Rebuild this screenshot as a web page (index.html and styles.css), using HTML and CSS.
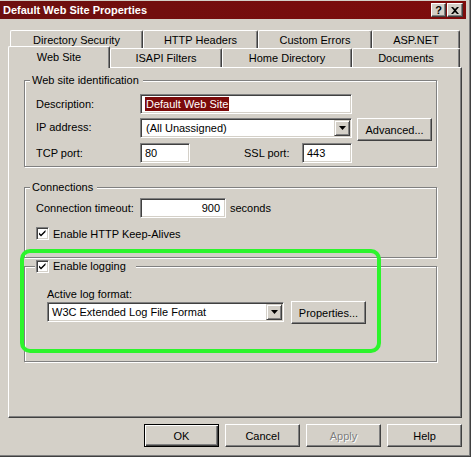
FILE: index.html
```html
<!DOCTYPE html>
<html lang="en">
<head>
  <meta charset="UTF-8">
  <title>Default Web Site Properties</title>
  <link rel="stylesheet" href="styles.css">
</head>
<body>
  <div class="dialog">
    <div class="titlebar">
      <span class="titlebar__text">Default Web Site Properties</span>
      <div class="titlebar__buttons">
        <span class="cap-btn cap-btn--help">?</span>
        <span class="cap-btn cap-btn--close">
          <svg width="8" height="7" viewBox="0 0 8 7"><path d="M0 0h2l2 2 2-2h2L5 3.5 8 7H6L4 5 2 7H0l3-3.5z" fill="#000"/></svg>
        </span>
      </div>
    </div>

    <div class="content">
      <div class="tabs">
        <div class="tabs__row tabs__row--back">
          <div class="tab" style="width:133px">Directory Security</div>
          <div class="tab" style="width:115px">HTTP Headers</div>
          <div class="tab" style="width:114px">Custom Errors</div>
          <div class="tab" style="width:88px">ASP.NET</div>
        </div>
        <div class="tabs__row tabs__row--front">
          <div class="tab tab--active" style="width:102px">Web Site</div>
          <div class="tab" style="width:112px">ISAPI Filters</div>
          <div class="tab" style="width:130px">Home Directory</div>
          <div class="tab" style="width:108px">Documents</div>
        </div>
      </div>

      <div class="panel">
        <fieldset class="group group--ident">
          <legend class="group__title">Web site identification</legend>
          <div class="row row--first">
            <span class="label">Description:</span>
            <div class="field field--desc"><span class="selected">Default Web Site</span></div>
          </div>
          <div class="row row--ip">
            <span class="label label--tall">IP address:</span>
            <div class="combo combo--ip">
              <span class="combo__text">(All Unassigned)</span>
              <span class="combo__arrow"><svg width="7" height="4" viewBox="0 0 7 4"><path d="M0 0h7L3.5 4z" fill="#000"/></svg></span>
            </div>
            <span class="btn btn--advanced">Advanced...</span>
          </div>
          <div class="row row--ports">
            <span class="label">TCP port:</span>
            <div class="field field--port">80</div>
            <span class="label label--ssl">SSL port:</span>
            <div class="field field--port">443</div>
          </div>
        </fieldset>

        <fieldset class="group group--conn">
          <legend class="group__title">Connections</legend>
          <div class="row row--timeout">
            <span class="label">Connection timeout:</span>
            <div class="field field--timeout">900</div>
            <span class="unit">seconds</span>
          </div>
          <div class="check-row">
            <span class="checkbox"><svg width="9" height="9" viewBox="0 0 9 9"><path d="M1 3.5l2 2 4.5-4.5v2L3 7.5 1 5.5z" fill="#000"/></svg></span>
            <span>Enable HTTP Keep-Alives</span>
          </div>
        </fieldset>

        <fieldset class="group group--log">
          <legend class="group__title group__title--check">
            <span class="checkbox"><svg width="9" height="9" viewBox="0 0 9 9"><path d="M1 3.5l2 2 4.5-4.5v2L3 7.5 1 5.5z" fill="#000"/></svg></span>
            <span>Enable logging</span>
          </legend>
          <div class="log-label">Active log format:</div>
          <div class="row row--log">
            <div class="combo combo--log">
              <span class="combo__text">W3C Extended Log File Format</span>
              <span class="combo__arrow"><svg width="7" height="4" viewBox="0 0 7 4"><path d="M0 0h7L3.5 4z" fill="#000"/></svg></span>
            </div>
            <span class="btn btn--props">Properties...</span>
          </div>
        </fieldset>

        <div class="highlight"></div>
      </div>

      <div class="actions">
        <span class="btn btn--default">OK</span>
        <span class="btn">Cancel</span>
        <span class="btn btn--disabled">Apply</span>
        <span class="btn">Help</span>
      </div>
    </div>
  </div>
</body>
</html>
```

FILE: styles.css
```css
*{
  box-sizing:border-box;
}
body{
  margin:0;
  background:#d4d0c8;
  font-family:"Liberation Sans", Arial, sans-serif;
  font-size:11px;
  color:#000;
}
.dialog{
  width:471px;
  height:457px;
  display:flex;
  flex-direction:column;
  padding:1px 4px 0 0;
  background:#d4d0c8;
  border-right:1px solid #404040;
  border-bottom:1px solid #404040;
  box-shadow:inset -1px -1px 0 #808080;
}

/* title bar */
.titlebar{
  height:18px;
  display:flex;
  align-items:center;
  justify-content:space-between;
  padding:0 3px 0 3px;
  background:linear-gradient(to right, #6c0f0f, #7e0c0c);
  color:#fff;
}
.titlebar__text{
  font-weight:bold;
  font-size:11px;
}
.titlebar__buttons{
  display:flex;
}
.cap-btn{
  width:16px;
  height:14px;
  display:flex;
  align-items:center;
  justify-content:center;
  background:#d4d0c8;
  color:#000;
  font-weight:bold;
  font-size:11px;
  border:1px solid;
  border-color:#fff #404040 #404040 #fff;
  box-shadow:inset -1px -1px 0 #808080;
}
.cap-btn--help{
  width:15px;
  margin-right:1px;
}

.content{
  padding-left:8px;
}

/* tabs */
.tabs{
  margin-top:11px;
}
.tabs__row{
  display:flex;
}
.tabs__row--back{
  height:18px;
  margin-left:2px;
}
.tabs__row--front{
  height:19px;
  align-items:flex-end;
}
.tab{
  height:100%;
  display:flex;
  align-items:center;
  justify-content:center;
  background:#d4d0c8;
  border-top:1px solid #fff;
  border-left:1px solid #fff;
  border-right:1px solid #404040;
  border-radius:2px 2px 0 0;
  box-shadow:inset -1px 0 0 #808080;
  white-space:nowrap;
}
.tab--active{
  position:relative;
  z-index:2;
  height:22px;
  margin-bottom:-1px;
  padding-bottom:2px;
}

/* panel */
.panel{
  position:relative;
  width:454px;
  height:351px;
  padding-top:6px;
  border:1px solid;
  border-color:#fff #404040 #404040 #fff;
  box-shadow:inset -1px -1px 0 #808080;
}
.group{
  width:413px;
  margin:0 0 0 15px;
  padding:0 0 0 11px;
  border:1px solid #808080;
  box-shadow:1px 1px 0 #fff, inset 1px 1px 0 #fff;
  min-inline-size:0;
}
.group__title{
  margin-left:-6px;
  padding:0 4px 0 2px;
  line-height:13px;
  background:#d4d0c8;
}
.group__title--check{
  display:flex;
  align-items:center;
  gap:4px;
  margin-left:-1px;
  padding:0 10px 0 1px;
}
.group--ident{
  padding-bottom:3px;
}
.group--conn{
  margin-top:14px;
  padding-bottom:17px;
}
.group--log{
  margin-top:2px;
  padding-bottom:37px;
}

.row{
  display:flex;
  align-items:center;
}
.row--first{
  margin-top:7px;
  height:20px;
}
.row--ip{
  margin-top:4px;
  height:23px;
  align-items:flex-start;
}
.row--ports{
  margin-top:2px;
  height:20px;
}
.row--timeout{
  margin-top:4px;
  height:20px;
}
.label{
  width:104px;
  flex:none;
}
.label--tall{
  line-height:19px;
}
.label--ssl{
  width:58px;
  margin-left:54px;
}
.unit{
  margin-left:4px;
}

.field{
  height:20px;
  display:flex;
  align-items:center;
  padding-left:4px;
  background:#fff;
  border:1px solid;
  border-color:#808080 #fff #fff #808080;
  box-shadow:inset 1px 1px 0 #404040, inset -1px -1px 0 #d4d0c8;
}
.field--desc{
  width:212px;
}
.field--port{
  width:50px;
}
.field--timeout{
  width:86px;
  justify-content:flex-end;
  padding-right:5px;
}
.selected{
  background:#7b0a0a;
  color:#fff;
  padding:0 1px;
  line-height:14px;
}

.combo{
  height:20px;
  display:flex;
  align-items:center;
  justify-content:space-between;
  padding:0 1px 0 5px;
  background:#fff;
  border:1px solid;
  border-color:#808080 #fff #fff #808080;
  box-shadow:inset 1px 1px 0 #404040, inset -1px -1px 0 #d4d0c8;
}
.combo--ip{
  width:212px;
}
.combo--log{
  width:237px;
  margin-top:1px;
  padding-left:4px;
}
.combo__arrow{
  width:16px;
  height:16px;
  display:flex;
  align-items:center;
  justify-content:center;
  background:#d4d0c8;
  border:1px solid;
  border-color:#d4d0c8 #404040 #404040 #d4d0c8;
  box-shadow:inset 1px 1px 0 #fff, inset -1px -1px 0 #808080;
}

.btn{
  width:75px;
  height:23px;
  flex:none;
  display:flex;
  align-items:center;
  justify-content:center;
  background:#d4d0c8;
  border:1px solid;
  border-color:#fff #404040 #404040 #fff;
  box-shadow:inset -1px -1px 0 #808080;
}
.btn--advanced{
  margin-left:5px;
}
.btn--props{
  margin-left:7px;
}
.btn--default{
  border:1px solid #000;
  box-shadow:inset 1px 1px 0 #fff, inset -1px -1px 0 #404040, inset -2px -2px 0 #808080;
}
.btn--disabled{
  color:#808080;
  text-shadow:1px 1px 0 #fff;
}

.checkbox{
  width:13px;
  height:13px;
  flex:none;
  display:flex;
  align-items:center;
  justify-content:center;
  background:#fff;
  border:1px solid;
  border-color:#808080 #fff #fff #808080;
  box-shadow:inset 1px 1px 0 #404040, inset -1px -1px 0 #d4d0c8;
}
.check-row{
  display:flex;
  align-items:center;
  gap:4px;
  margin-top:9px;
  height:13px;
}

.log-label{
  margin:15px 0 0 11px;
  line-height:13px;
}
.row--log{
  margin:0 0 0 11px;
  align-items:flex-start;
}

.highlight{
  position:absolute;
  left:11px;
  top:181px;
  width:361px;
  height:104px;
  border:4px solid #2cf42c;
  border-radius:10px;
}

/* dialog buttons */
.actions{
  width:454px;
  display:flex;
  justify-content:flex-end;
  gap:6px;
  margin-top:6px;
}
```
